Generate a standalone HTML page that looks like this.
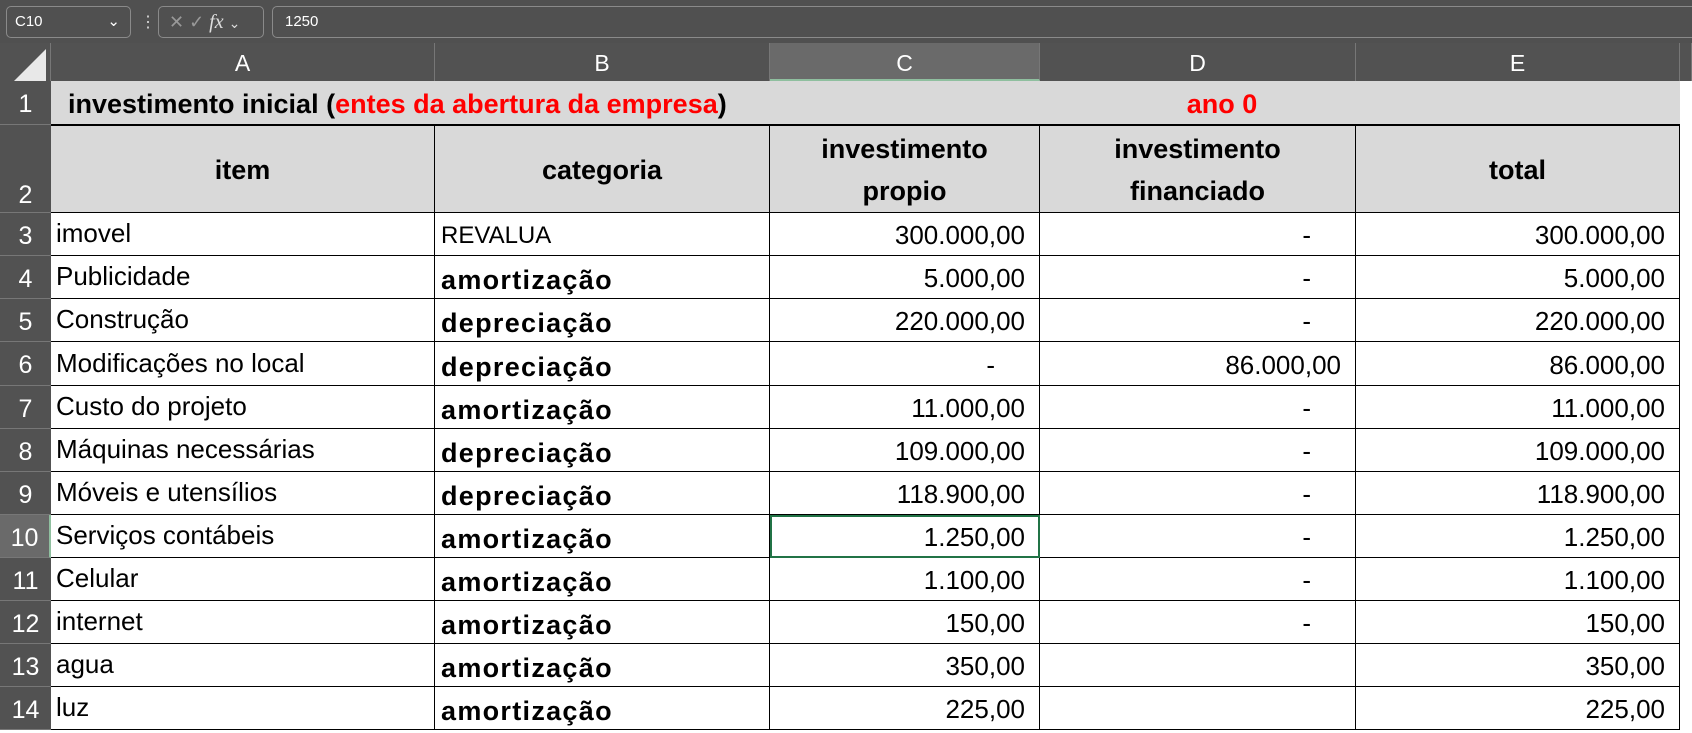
<!DOCTYPE html>
<html><head><meta charset="utf-8"><style>
body{margin:0;width:1692px;height:730px;overflow:hidden;background:#fff;font-family:"Liberation Sans",Arial,sans-serif;position:relative}
.top{position:absolute;left:0;top:0;width:1692px;height:43px;background:#505050}
.box{position:absolute;top:6px;height:32px;border:1px solid #8a8a8a;border-radius:5px;color:#fff;font-size:15px;line-height:30px;box-sizing:border-box}
.ch{position:absolute;top:43px;height:38px;background:#525252;color:#fff;font-size:23px;line-height:40px;text-align:center;border-right:1px solid #777;box-sizing:border-box}
.rh{position:absolute;left:0;width:51px;background:#525252;color:#fff;font-size:25px;text-align:center;border-bottom:1px solid #777;box-sizing:border-box}
.c{position:absolute;box-sizing:border-box;font-size:26px;color:#000;white-space:nowrap;overflow:hidden;border-right:1px solid #000;border-bottom:1px solid #000}
.hd{background:#d9d9d9;font-weight:bold;font-size:27px;text-align:center}
.r{text-align:right;padding-right:14px}
.b{font-weight:bold;font-size:27px}
.red{color:#f00}
</style></head><body>
<div class="top"></div>
<div class="box" style="left:6px;width:125px;padding-left:8px">C10<span style="position:absolute;right:10px;top:0">&#8964;</span></div>
<div style="position:absolute;left:140px;top:12px;color:#ddd;font-size:16px">&#8942;</div>
<div class="box" style="left:158px;width:106px;color:#999;padding-left:10px;font-size:18px">✕ ✓ <i style="color:#ddd;font-family:'Liberation Serif',serif;font-size:20px">fx</i> <span style="color:#ddd;font-size:14px">&#8964;</span></div>
<div class="box" style="left:272px;width:1440px;padding-left:12px">1250</div>

<div class="ch" style="left:0;width:51px;background:#525252"><div style="position:absolute;left:14px;top:6px;width:0;height:0;border-left:32px solid transparent;border-bottom:32px solid #e8e8e8"></div></div>
<div class="ch" style="left:51px;width:384px">A</div>
<div class="ch" style="left:435px;width:335px">B</div>
<div class="ch" style="left:770px;width:270px;background:#6a6a6a;border-bottom:2px solid #8fbf9f">C</div>
<div class="ch" style="left:1040px;width:316px">D</div>
<div class="ch" style="left:1356px;width:324px">E</div>
<div class="ch" style="left:1680px;width:12px"></div>

<div class="rh" style="top:81px;height:44px;line-height:46px">1</div>
<div class="rh" style="top:125px;height:88px;line-height:140px">2</div>
<div class="rh" style="top:213px;height:43px;line-height:46px">3</div>
<div class="rh" style="top:256px;height:43px;line-height:46px">4</div>
<div class="rh" style="top:299px;height:43px;line-height:46px">5</div>
<div class="rh" style="top:342px;height:44px;line-height:46px">6</div>
<div class="rh" style="top:386px;height:43px;line-height:46px">7</div>
<div class="rh" style="top:429px;height:43px;line-height:46px">8</div>
<div class="rh" style="top:472px;height:43px;line-height:46px">9</div>
<div class="rh" style="top:515px;height:43px;line-height:46px;background:#6a6a6a;border-right:2px solid #8fbf9f">10</div>
<div class="rh" style="top:558px;height:43px;line-height:46px">11</div>
<div class="rh" style="top:601px;height:43px;line-height:46px">12</div>
<div class="rh" style="top:644px;height:43px;line-height:46px">13</div>
<div class="rh" style="top:687px;height:43px;line-height:46px">14</div>

<div class="c hd" style="left:51px;top:81px;width:719px;height:44px;line-height:46px;text-align:left;padding-left:17px;border-right:none">investimento inicial (<span class="red">entes da abertura da empresa</span>)</div>
<div class="c hd" style="left:770px;top:81px;width:910px;height:44px;line-height:46px;padding-right:0;border-right:none"><span class="red" style="position:absolute;left:390px;width:124px">ano 0</span></div>
<div class="c hd" style="left:51px;top:125px;width:384px;height:88px;line-height:88px;border-top:1px solid #000">item</div>
<div class="c hd" style="left:435px;top:125px;width:335px;height:88px;line-height:88px;border-top:1px solid #000">categoria</div>
<div class="c hd" style="left:770px;top:125px;width:270px;height:88px;line-height:42px;padding-top:2px;border-top:1px solid #000">investimento<br>propio</div>
<div class="c hd" style="left:1040px;top:125px;width:316px;height:88px;line-height:42px;padding-top:2px;border-top:1px solid #000">investimento<br>financiado</div>
<div class="c hd" style="left:1356px;top:125px;width:324px;height:88px;line-height:88px;border-top:1px solid #000">total</div>

<div id="rows"></div>
<script>
var d=[["imovel","REVALUA","300.000,00","-","300.000,00",0],
["Publicidade","amortização","5.000,00","-","5.000,00",1],
["Construção","depreciação","220.000,00","-","220.000,00",1],
["Modificações no local","depreciação","-","86.000,00","86.000,00",1],
["Custo do projeto","amortização","11.000,00","-","11.000,00",1],
["Máquinas necessárias","depreciação","109.000,00","-","109.000,00",1],
["Móveis e utensílios","depreciação","118.900,00","-","118.900,00",1],
["Serviços contábeis","amortização","1.250,00","-","1.250,00",1],
["Celular","amortização","1.100,00","-","1.100,00",1],
["internet","amortização","150,00","-","150,00",1],
["agua","amortização","350,00","","350,00",1],
["luz","amortização","225,00","","225,00",1]];
var h="",tops=[213,256,299,342,386,429,472,515,558,601,644,687];
d.forEach(function(r,i){var t=tops[i],ht=(i<11?tops[i+1]:730)-t;
var s='top:'+t+'px;height:'+ht+'px;line-height:'+(ht+2)+'px;';
h+='<div class="c" style="left:51px;width:384px;'+s+'padding-left:5px;line-height:'+(ht-2)+'px">'+r[0]+'</div>';
h+='<div class="c'+(r[5]?' b':'')+'" style="left:435px;width:335px;'+s+'padding-left:6px;'+(r[5]?'letter-spacing:1.3px;line-height:'+(ht+6)+'px':'font-size:24px')+'">'+r[1]+'</div>';
var cp=r[2]=="-"?'padding-right:44px':'';
h+='<div class="c r" style="left:770px;width:270px;'+s+cp+(i==7?';outline:2px solid #217346;outline-offset:-2px':'')+'">'+r[2]+'</div>';
var dp=r[3]=="-"?'padding-right:44px':'';
h+='<div class="c r" style="left:1040px;width:316px;'+s+dp+'">'+r[3]+'</div>';
h+='<div class="c r" style="left:1356px;width:324px;'+s+'">'+r[4]+'</div>';});
document.getElementById("rows").innerHTML=h;
</script>
</body></html>
